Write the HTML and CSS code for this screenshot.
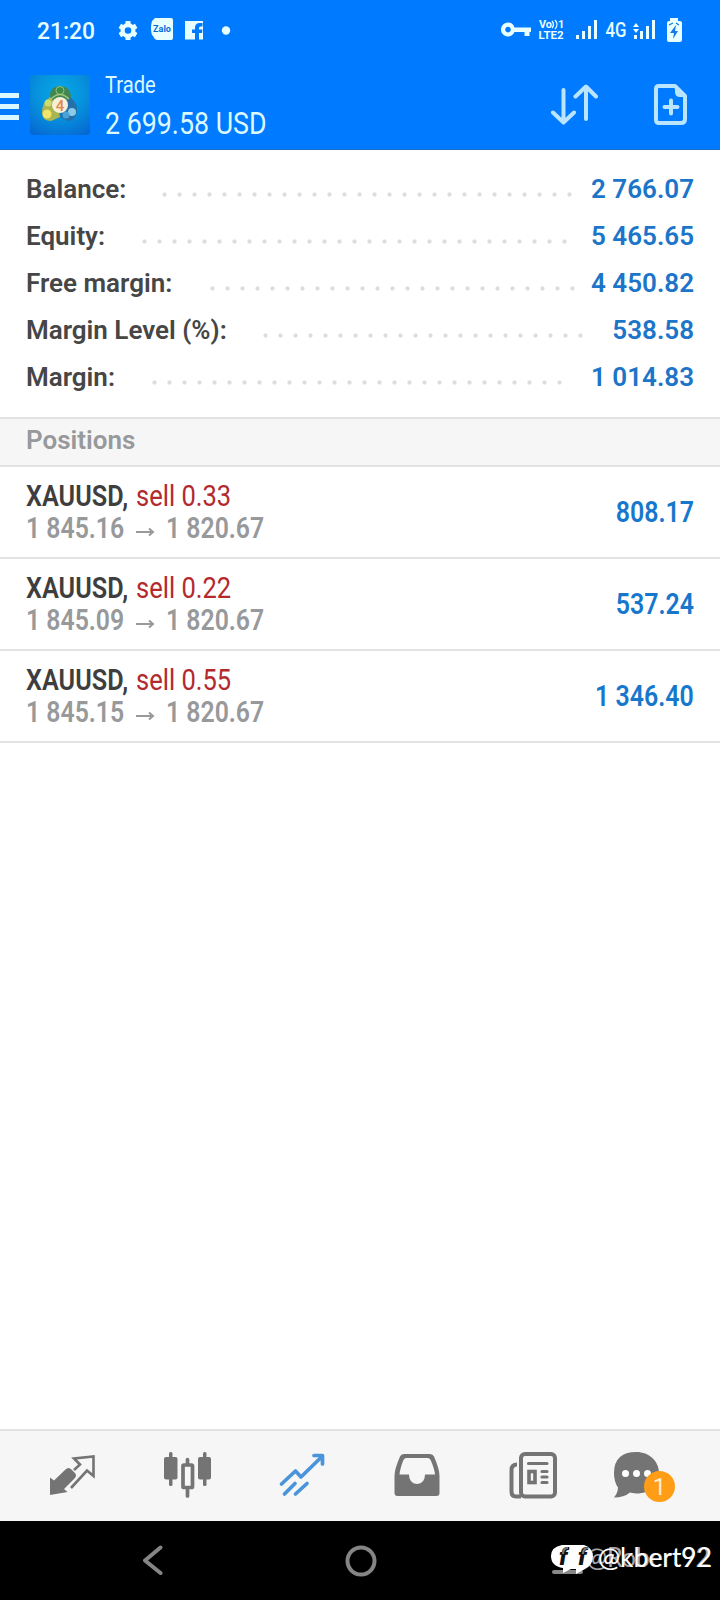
FILE: index.html
```
<!DOCTYPE html>
<html lang="en">
<head>
<meta charset="utf-8">
<title>Trade</title>
<link rel="stylesheet" href="styles.css">
</head>
<body>
<div class="screen">
  <header class="top">
    <svg class="status" width="720" height="60" viewBox="0 0 720 60">
      <g class="white">
        <text x="37" y="39" class="clock" textLength="58" lengthAdjust="spacingAndGlyphs">21:20</text>
        <circle cx="128" cy="30.500" r="5.400" fill="none" stroke="#e8ffff" stroke-width="4.200"/>
        <path stroke="#e8ffff" stroke-width="5" d="M128 21v3M128 37v3M119.800 25.800l2.600 1.500M133.600 33.700l2.600 1.500M119.800 35.200l2.600-1.500M133.600 27.300l2.600-1.500"/>
        <path d="M155 18h16q2 0 2 2v18q0 2-2 2h-14q-3-1-4-4l-1-1q-2-7 0-14z"/>
        <text x="153" y="32" class="zalo" textLength="18" lengthAdjust="spacingAndGlyphs">Zalo</text>
        <path d="M185 21h18v18.500h-4V33h3l.5-3.500H199V28q0-1.500 1.500-1.500h2V23h-3.500q-4 .5-4 4.500v2h-3V33h3v6.500h-10z"/>
        <circle cx="226" cy="30.500" r="4.200"/>
        <path fill-rule="evenodd" d="M508 22.500a7 7 0 0 1 6.500 5H531v4.500h-1.500v4h-5v-4h-10a7 7 0 1 1-6.500-9.500zm0 4.300a2.800 2.800 0 1 0 .01 0z"/>
        <text x="539" y="28" class="tiny" textLength="13" lengthAdjust="spacingAndGlyphs">Vo</text>
        <path d="M552 21q3 3.500 0 7M555 20q4 4.500 0 9" fill="none" stroke="#e8ffff" stroke-width="1.300"/>
        <text x="558" y="28" class="tiny">1</text>
        <text x="538.500" y="39" class="tiny" textLength="25" lengthAdjust="spacingAndGlyphs">LTE2</text>
        <path d="M576 35h3v4h-3zM582 31h3v8h-3zM588 26h3v13h-3zM594 20h3v19h-3zM634 35h3v4h-3zM640 31h3v8h-3zM646 26h3v13h-3zM652 20h3v19h-3z"/>
        <text x="605.500" y="37" class="net" textLength="21" lengthAdjust="spacingAndGlyphs">4G</text>
        <path d="M633 27l3-4 3 4zM633 29l3 4 3-4z"/>
        <path d="M670 18h8v3h2q2 0 2 2v17q0 2-2 2h-11q-2 0-2-2V23q0-2 2-2h1z"/>
        <path d="M676 25l-6 8h4l-1 6 5-8h-3z" fill="#1677e6"/>
        <path d="M669 25l4-2M676 23l3 2" stroke="#1677e6" stroke-width="1.300"/>
      </g>
    </svg>
    <div class="bar">
      <div class="menu"><i></i><i></i><i></i></div>
      <svg class="logo" width="60" height="60" viewBox="0 0 60 60">
        <defs>
          <radialGradient id="sky" cx=".5" cy=".3" r=".8"><stop offset="0" stop-color="#05abe9"/><stop offset=".55" stop-color="#078edb"/><stop offset="1" stop-color="#0569d4"/></radialGradient>
        </defs>
        <rect width="60" height="60" rx="3" fill="url(#sky)"/>
        <path d="M20 21q0-10 10-10t11 10l-2 9H22z" fill="#428654"/>
        <circle cx="30" cy="15.500" r="4" fill="#3f8a45" stroke="#8cc487"/>
        <path d="M20 22q-8 6-8 15 0 9 9 9l9-4-3-12z" fill="#a9b650"/>
        <circle cx="17" cy="39" r="4.500" fill="#f0e56a"/><circle cx="18" cy="28" r="3.500" fill="#cddc6f"/>
        <path d="M40 22q8 6 7 15-2 9-9 9l-8-4 3-12z" fill="#266fa8"/>
        <circle cx="42" cy="37" r="4" fill="#8ccbe8"/><circle cx="36" cy="40" r="3.500" fill="#4aa2d8"/>
        <circle cx="30" cy="30" r="8" fill="#f7efd8"/>
        <path d="M21 24q9-9 18 0" fill="none" stroke="#a3c87a" stroke-width="1.500"/>
        <text x="30" y="35.500" class="four" text-anchor="middle">4</text>
      </svg>
      <div class="title">
        <div class="name"><span>Trade</span></div>
        <div class="sum"><span>2 699.58 USD</span></div>
      </div>
      <svg class="sort" width="48" height="44" viewBox="0 0 48 44">
        <path d="M13.500 7v32M3 29.500L13.500 39.500 24 29.500M36 36V4M25.500 13.500L36 3.500l10 10"/>
      </svg>
      <svg class="new" width="36" height="44" viewBox="0 0 36 44">
        <path class="line" d="M6 3h16l10 10v23q0 4-4 4H6q-3 0-3-3V6q0-3 3-3z"/>
        <path d="M22 2v7q0 5 5 5h7z" fill="#b9e5ff"/>
        <path class="plus" d="M11.500 24h13M18 17.500v13"/>
      </svg>
    </div>
  </header>

  <section class="summary">
    <div class="line"><span>Balance:</span><i class="dots" style="width:420px;margin-right:12px"></i><b>2 766.07</b></div>
    <div class="line"><span>Equity:</span><i class="dots" style="width:435px;margin-right:17.500px"></i><b>5 465.65</b></div>
    <div class="line"><span>Free margin:</span><i class="dots" style="width:375px;margin-right:9.500px"></i><b>4 450.82</b></div>
    <div class="line"><span>Margin Level (%):</span><i class="dots" style="width:330px;margin-right:1.500px"></i><b>538.58</b></div>
    <div class="line"><span>Margin:</span><i class="dots" style="width:420px;margin-right:22.500px"></i><b>1 014.83</b></div>
  </section>

  <h2 class="section">Positions</h2>
  <ul class="positions">
    <li>
      <div class="deal">
        <div class="top-line"><span class="sym">XAUUSD,</span><span class="side">sell 0.33</span></div>
        <div class="prices"><span>1 845.16</span><svg width="19" height="10" viewBox="0 0 19 10"><path d="M0 5h17M13 1.500l4 3.500-4 3.500"/></svg><span>1 820.67</span></div>
      </div>
      <b class="profit">808.17</b>
    </li>
    <li>
      <div class="deal">
        <div class="top-line"><span class="sym">XAUUSD,</span><span class="side">sell 0.22</span></div>
        <div class="prices"><span>1 845.09</span><svg width="19" height="10" viewBox="0 0 19 10"><path d="M0 5h17M13 1.500l4 3.500-4 3.500"/></svg><span>1 820.67</span></div>
      </div>
      <b class="profit">537.24</b>
    </li>
    <li>
      <div class="deal">
        <div class="top-line"><span class="sym">XAUUSD,</span><span class="side">sell 0.55</span></div>
        <div class="prices"><span>1 845.15</span><svg width="19" height="10" viewBox="0 0 19 10"><path d="M0 5h17M13 1.500l4 3.500-4 3.500"/></svg><span>1 820.67</span></div>
      </div>
      <b class="profit">1 346.40</b>
    </li>
  </ul>

  <nav class="tabs">
    <svg width="48" height="48" viewBox="0 0 48 48">
      <path fill="#747474" d="M17.500 17.500q3-3 6 0l3 3q3 3 0 6L16 37l3.500 3L2 43V25.500l4 3z"/>
      <path fill="none" stroke="#747474" stroke-width="2.600" d="M26 18l6-5.500-6-6 19.500-2V24l-6.500-5.500L23 36"/>
    </svg>
    <svg width="48" height="48" viewBox="0 0 48 48">
      <g fill="#747474"><rect x="1" y="5" width="13.500" height="22.500" rx="2"/><rect x="6" y="0" width="3.500" height="34" rx="1.500"/><rect x="35" y="5" width="13" height="22.500" rx="2"/><rect x="40" y="0" width="3.500" height="34" rx="1.500"/></g>
      <g fill="none" stroke="#747474" stroke-width="3.700" stroke-linecap="round"><path d="M24.500 7.500v5M24.500 36v8"/><rect x="20" y="13" width="9.500" height="22.500" rx="1"/></g>
    </svg>
    <svg width="48" height="48" viewBox="0 0 48 48">
      <path fill="none" stroke="#4a94db" stroke-width="3.700" stroke-linecap="round" stroke-linejoin="round" d="M3.500 32L17.500 19 23 25 44 4.500M36 3.500h8.500V12M6.500 42L17 31.500M17.500 42L29 31.500"/>
    </svg>
    <svg width="48" height="48" viewBox="0 0 48 48">
      <path fill="#747474" fill-rule="evenodd" d="M10 2h26q3 0 4 2.500Q45.500 17 45.500 24v17q0 3-3 3H3.500q-3 0-3-3V24Q.5 17 6 4.500 7 2 10 2zM12.500 6q-2.500 0-3.500 3Q6 17 5.500 22.500H15q0 9 8 9.500 8-.5 8-9.500h10Q40.500 17 37 9q-1-3-3.500-3z"/>
    </svg>
    <svg width="48" height="48" viewBox="0 0 48 48">
      <g fill="none" stroke="#747474" stroke-width="4"><rect x="12" y="2" width="34" height="42.500" rx="4"/><path d="M12 44.500H7q-4.500 0-4.500-5V18q0-5.500 5.500-5.500"/><path stroke-width="3.200" stroke-linecap="round" d="M19.500 11.500H38M33 19.500h5M33 25h5M33 30.500h5"/><rect x="20" y="19.500" width="6" height="11" stroke-width="3.600"/></g>
    </svg>
    <div class="chat">
      <svg width="48" height="48" viewBox="0 0 48 48">
        <path fill="#747474" d="M23.500 0C36 0 46 9 46 21S36 41.500 24 41.500q-3 0-7-1-6 5-16 5 4-5 4-10Q1 30 1 21 1 0 23.500 0z"/>
        <g fill="#fff"><circle cx="12.500" cy="21.500" r="3.500"/><circle cx="23.500" cy="21.500" r="3.500"/><circle cx="34.500" cy="21.500" r="3.500"/></g>
      </svg>
      <span class="badge">1</span>
    </div>
  </nav>

  <footer class="system">
    <svg class="back" width="20" height="30" viewBox="0 0 20 30"><path d="M17.500 2.500L2 15.500l15.500 12.500"/></svg>
    <svg class="home" width="32" height="32" viewBox="0 0 32 32"><circle cx="16" cy="16" r="13.500"/></svg>
    <svg class="mark" width="175" height="45" viewBox="0 0 175 45">
      <rect x="7" y="25" width="31" height="4" rx="2" fill="#888"/>
      <path fill="#fff" d="M17 0h22q9 3 9 11.500T40 24l-9 5v-5h-5l-8 4v-5Q6 21 6 11 6 2 17 0z"/>
      <g class="fb"><text x="14" y="20">f</text><text x="33" y="20">f</text></g>
      <path d="M23 3q-5 0-5 6M43 3q-5 0-5 6" fill="none" stroke="#777" stroke-width="2"/>
      <g class="handle">
        <text x="41" y="22" textLength="124" lengthAdjust="spacingAndGlyphs" opacity=".65">@Robert92</text>
        <text x="53" y="22" textLength="114" lengthAdjust="spacingAndGlyphs">@kbert92</text>
      </g>
    </svg>
  </footer>
</div>
</body>
</html>
```
FILE: styles.css
```
* { box-sizing: border-box; }
body { margin: 0; background: #fff; font-family: Roboto, "Liberation Sans", sans-serif; }
svg { display: block; flex: none; }
.screen { width: 720px; height: 1600px; display: flex; flex-direction: column; overflow: hidden; }

.top { height: 150px; background: #007aff; border-bottom: 1px solid #1c6fc8; flex: none; }
.white { fill: #e8ffff; }
.clock { font-size: 24px; font-weight: 500; }
.zalo { font-size: 9px; font-weight: 700; fill: #0a6ad8; }
.tiny { font-size: 11px; font-weight: 700; }
.net { font-size: 20px; font-weight: 500; }
.bar { display: flex; height: 89px; }
.menu { width: 19px; padding-top: 33px; display: flex; flex-direction: column; gap: 6px; flex: none; }
.menu i { height: 5px; background: #dcf8ff; }
.logo { margin: 15px 0 0 11px; }
.four { font-size: 15px; font-weight: 500; fill: #e0864f; }
.title { margin-left: 15px; padding-top: 10px; color: #dcf9ff; width: 300px; }
.title span { display: inline-block; transform-origin: 0 50%; white-space: nowrap; }
.name { font-size: 24px; line-height: 30px; }
.name span { transform: scaleX(.84); }
.sum { font-size: 32px; line-height: 47px; }
.sum span { transform: scaleX(.837); }
.sort { margin: 23px 0 0 auto; fill: none; stroke: #b9e5ff; stroke-width: 4; stroke-linecap: round; stroke-linejoin: round; }
.new { margin: 23px 31px 0 55px; }
.new .line, .new .plus { fill: none; stroke: #b9e5ff; stroke-width: 4; stroke-linecap: round; stroke-linejoin: round; }

.summary { padding: 15px 26px 17px 26px; flex: none; }
.summary .line { display: flex; align-items: center; height: 47px; font-size: 26px; font-weight: 600; color: #464646; white-space: nowrap; }
.summary b { width: 105px; text-align: right; font-weight: 600; color: #1c75c8; flex: none; }
.dots { height: 5px; margin-left: auto; margin-top: 12px; flex: none; background: radial-gradient(circle at 7.5px 2.5px, #ddd 1.7px, transparent 2.5px) 0 0 / 15px 5px; }

.section { margin: 0; height: 50px; padding-left: 26px; border: solid #e2e2e2; border-width: 2px 0; background: #f6f6f6; color: #97999b; font-size: 26px; font-weight: 600; line-height: 42px; flex: none; }

.positions { list-style: none; margin: 0; padding: 0; flex: 1; }
.positions li { height: 92px; padding: 13px 26px 0 26px; border-bottom: 2px solid #e2e2e2; display: flex; justify-content: space-between; }
.deal { width: 300px; font-size: 29px; line-height: 32px; white-space: nowrap; }
.deal span, .profit { display: inline-block; transform-origin: 0 50%; }
.top-line, .prices { display: flex; height: 32px; align-items: center; }
.sym { width: 110px; font-weight: 600; color: #3e3e3e; transform: scaleX(.87); }
.side { color: #b32a2e; transform: scaleX(.88); }
.prices { color: #97999b; font-weight: 600; }
.prices span { width: 110px; transform: scaleX(.855); }
.prices svg { margin: 7px 11px 0 0; fill: none; stroke: #97999b; stroke-width: 2; }
.profit { font-size: 29px; line-height: 65px; font-weight: 600; color: #1777cc; transform: scaleX(.86); transform-origin: 100% 50%; }

.tabs { height: 92px; background: #f6f6f6; border-top: 2px solid #e2e2e2; display: flex; gap: 67.200px; padding: 21px 0 0 48px; flex: none; }
.chat { position: relative; margin-left: -11px; }
.badge { position: absolute; left: 31px; top: 19px; width: 31px; height: 31px; border-radius: 50%; background: #ff9d17; color: #fff0c9; font-size: 24px; line-height: 32px; text-align: center; }

.system { height: 79px; background: #000; display: flex; flex: none; }
.back { margin: 24px 0 0 143px; fill: none; stroke: #858585; stroke-width: 4; stroke-linecap: round; stroke-linejoin: round; }
.home { margin: 24px 0 0 181.500px; fill: none; stroke: #858585; stroke-width: 4; }
.mark { margin: 24px 0 0 auto; }
.fb { font: italic 900 24px Roboto, sans-serif; fill: #111; }
.handle { font: 400 27px Lato, sans-serif; fill: #fff; }
```
